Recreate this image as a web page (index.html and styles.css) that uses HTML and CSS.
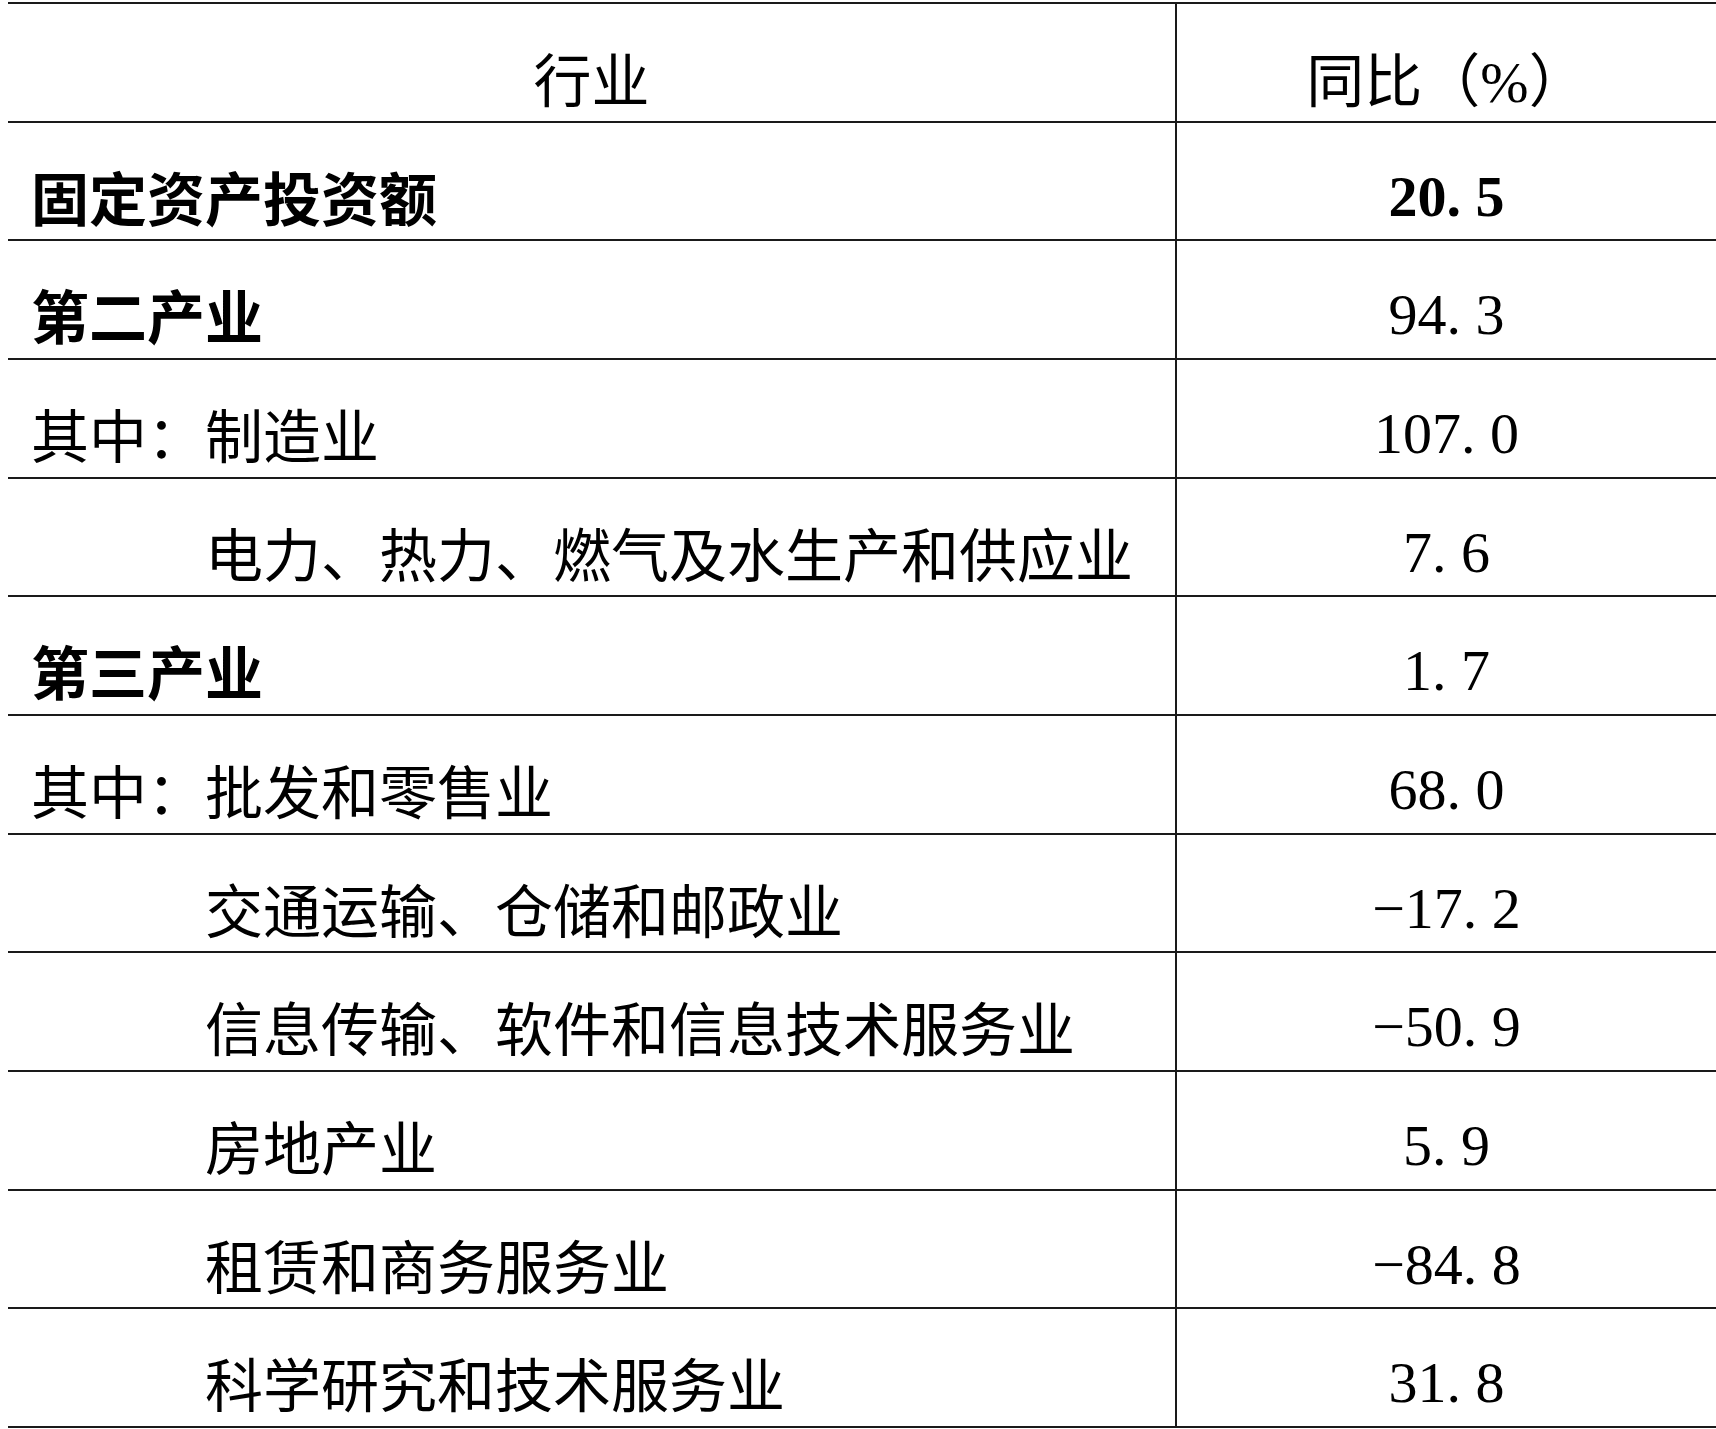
FILE: index.html
```html
<!DOCTYPE html>
<html lang="zh-CN">
<head>
<meta charset="utf-8">
<title>固定资产投资</title>
<link rel="stylesheet" href="styles.css">
</head>
<body>
<div class="table">
  <div class="row">
    <div class="name head">行业</div>
    <div class="val head-cjk">同比（<span class="pct">%</span>）</div>
  </div>
  <div class="row">
    <div class="name bold">固定资产投资额</div>
    <div class="val bold">20<span class="pt">.</span>5</div>
  </div>
  <div class="row">
    <div class="name bold">第二产业</div>
    <div class="val">94<span class="pt">.</span>3</div>
  </div>
  <div class="row">
    <div class="name">其中：制造业</div>
    <div class="val">107<span class="pt">.</span>0</div>
  </div>
  <div class="row">
    <div class="name sub">电力、热力、燃气及水生产和供应业</div>
    <div class="val">7<span class="pt">.</span>6</div>
  </div>
  <div class="row">
    <div class="name bold">第三产业</div>
    <div class="val">1<span class="pt">.</span>7</div>
  </div>
  <div class="row">
    <div class="name">其中：批发和零售业</div>
    <div class="val">68<span class="pt">.</span>0</div>
  </div>
  <div class="row">
    <div class="name sub">交通运输、仓储和邮政业</div>
    <div class="val">−17<span class="pt">.</span>2</div>
  </div>
  <div class="row">
    <div class="name sub">信息传输、软件和信息技术服务业</div>
    <div class="val">−50<span class="pt">.</span>9</div>
  </div>
  <div class="row">
    <div class="name sub">房地产业</div>
    <div class="val">5<span class="pt">.</span>9</div>
  </div>
  <div class="row">
    <div class="name sub">租赁和商务服务业</div>
    <div class="val">−84<span class="pt">.</span>8</div>
  </div>
  <div class="row">
    <div class="name sub">科学研究和技术服务业</div>
    <div class="val">31<span class="pt">.</span>8</div>
  </div>
</div>
</body>
</html>
```

FILE: styles.css
```css
html, body {
  background: #ffffff;
}
body {
  margin: 2px 0 0 8px;
  overflow: hidden;
  color: #000000;
  font-family: "Noto Sans CJK SC", "Noto Sans", sans-serif;
}
.table {
  width: 1708px;
  border-top: 2px solid #1a1a1a;
}
.row {
  display: grid;
  grid-template-columns: 1169px 1fr;
  height: 118.67px;
  box-sizing: border-box;
  border-bottom: 2px solid #1a1a1a;
}
.name {
  border-right: 2px solid #1a1a1a;
  padding: 45px 0 0 23px;
  font-size: 58px;
  line-height: 57px;
  white-space: nowrap;
  font-weight: 400;
}
.name.sub {
  padding-left: calc(23px + 3em);
}
.name.head {
  padding-left: 0;
  text-align: center;
}
.val {
  padding-top: 45px;
  text-align: center;
  font-family: "Liberation Serif", "Times New Roman", serif;
  font-size: 58px;
  line-height: 57px;
  white-space: nowrap;
}
.val.head-cjk {
  font-family: "Noto Sans CJK SC", "Noto Sans", sans-serif;
  font-size: 58px;
}
.pct {
  font-family: "Liberation Serif", "Times New Roman", serif;
}
.bold {
  font-weight: 700;
}
.pt {
  margin-right: 0.25em;
}
```
